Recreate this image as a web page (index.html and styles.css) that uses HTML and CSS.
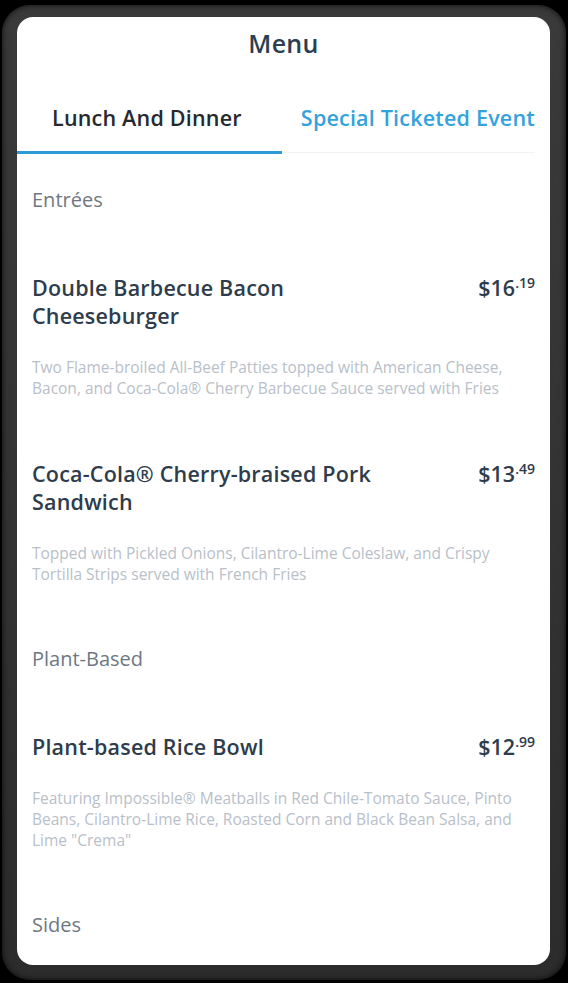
FILE: index.html
```html
<!DOCTYPE html>
<html lang="en">
<head>
  <meta charset="UTF-8" />
  <meta name="viewport" content="width=device-width, initial-scale=1.0"/>
  <title>Menu</title>
  <link rel="stylesheet" href="styles.css">
</head>
<body>

<div class="phone">
  <div class="screen">

    <!-- HEADER -->
    <div class="header">
      <h1>Menu</h1>
    </div>

    <!-- TABS -->
    <div class="tabs">
      <div class="tab active">Lunch And Dinner</div>
      <div class="tab">Special Ticketed Event</div>
    </div>

    <!-- MENU LIST -->
    <div class="menu">
      <h3 class="section">Entrées</h3>

      <div class="item">
        <div class="item-row">
          <div class="item-name">Double Barbecue Bacon Cheeseburger</div>
          <div class="price">$16<sup>.19</sup></div>
        </div>
        <p class="desc">Two Flame-broiled All-Beef Patties topped with American Cheese, Bacon, and Coca-Cola® Cherry Barbecue Sauce served with Fries</p>
      </div>

      <div class="item">
        <div class="item-row">
          <div class="item-name">Coca-Cola® Cherry-braised Pork Sandwich</div>
          <div class="price">$13<sup>.49</sup></div>
        </div>
        <p class="desc">Topped with Pickled Onions, Cilantro-Lime Coleslaw, and Crispy Tortilla Strips served with French Fries</p>
      </div>

      <h3 class="section">Plant-Based</h3>

      <div class="item">
        <div class="item-row">
          <div class="item-name">Plant-based Rice Bowl</div>
          <div class="price">$12<sup>.99</sup></div>
        </div>
        <p class="desc">Featuring Impossible® Meatballs in Red Chile-Tomato Sauce, Pinto Beans, Cilantro-Lime Rice, Roasted Corn and Black Bean Salsa, and Lime "Crema"</p>
      </div>

      <h3 class="section">Sides</h3>
    </div>

  </div>
</div>

</body>
</html>
```

FILE: styles.css
```css
body {
  margin: 0;
  background-color: #000;
  font-family: "Open Sans", "Noto Sans", sans-serif;
}
.phone {
  margin: 5px 2px 0 2px;
  height: 975px;
  box-sizing: border-box;
  padding: 12px 16px 15px 15px;
  border-radius: 28px;
  background: linear-gradient(#3a3a3a, #2c2c2c);
  box-shadow: inset 0 0 6px rgba(0, 0, 0, 0.8);
}
.screen {
  height: 100%;
  background: white;
  border-radius: 16px;
  overflow: hidden;
}
.header {
  height: 68px;
  box-sizing: border-box;
  padding-top: 11px;
  text-align: center;
}
.header h1 {
  margin: 0;
  font-size: 25px;
  line-height: 30px;
  font-weight: 600;
  letter-spacing: 0.3px;
  color: #2b3e52;
}
.tabs {
  display: flex;
  margin-right: 15px;
  border-bottom: 1px solid #f0f2f4;
}
.tab {
  padding: 21px 0 21px 19px;
  font-size: 21.5px;
  line-height: 24px;
  font-weight: 600;
  letter-spacing: 0.2px;
  color: #34a2dc;
  white-space: nowrap;
  border-bottom: 3px solid transparent;
  margin-bottom: -2px;
}
.tab.active {
  width: 267px;
  box-sizing: border-box;
  padding-left: 35px;
  color: #262a2e;
  border-bottom-color: #2f9bd6;
}
.menu {
  padding: 34px 15px 0 15px;
  display: flex;
  flex-direction: column;
  gap: 61px;
}
.section {
  margin: 0;
  font-size: 20px;
  line-height: 26px;
  font-weight: 400;
  color: #6e7883;
}
.item-row {
  display: flex;
  justify-content: space-between;
  align-items: flex-start;
}
.item-name {
  width: 360px;
  font-size: 21.5px;
  line-height: 28px;
  font-weight: 600;
  letter-spacing: 0.2px;
  color: #2e3c4b;
}
.price {
  font-size: 21.5px;
  line-height: 28px;
  font-weight: 600;
  color: #2e3c4b;
}
.price sup {
  font-size: 14px;
  vertical-align: top;
  line-height: 18px;
}
.desc {
  margin: 27px 0 0 0;
  font-size: 15.5px;
  line-height: 21px;
  color: #b8c0c9;
}
```
